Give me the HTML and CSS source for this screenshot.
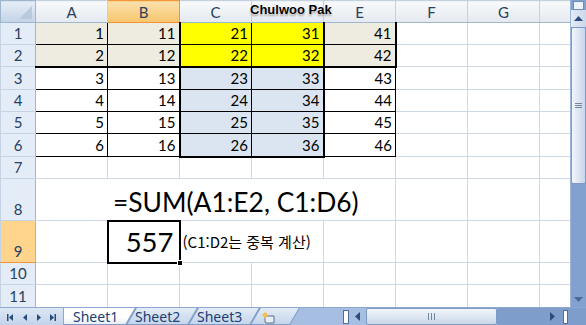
FILE: index.html
```html
<!DOCTYPE html>
<html lang="ko">

<head>
    <meta charset="UTF-8">
    <meta name="viewport" content="width=device-width, initial-scale=1.0">
    <title>Book1 - SUM</title>
    <link rel="stylesheet" href="styles.css">
</head>

<body>
    <div class="window">
        <div class="main">
            <div class="sheet">
                <table class="grid">
                    <colgroup>
                        <col class="c-head">
                        <col class="c-cell"><col class="c-cell"><col class="c-cell"><col class="c-cell">
                        <col class="c-cell"><col class="c-cell"><col class="c-cell">
                        <col class="c-last">
                    </colgroup>
                    <tr class="r-head">
                        <th class="corner"><span class="corner-tri"></span></th>
                        <th class="col">A</th>
                        <th class="col sel">B</th>
                        <th class="col">C</th>
                        <th class="col"><!-- D hidden under the name --></th>
                        <th class="col">E</th>
                        <th class="col">F</th>
                        <th class="col">G</th>
                        <th class="col"></th>
                    </tr>
                    <tr>
                        <th class="row">1</th>
                        <td class="d beige">1</td><td class="d beige">11</td>
                        <td class="d yel tl">21</td><td class="d yel tr">31</td>
                        <td class="d beige tr">41</td>
                        <td></td><td></td><td></td>
                    </tr>
                    <tr>
                        <th class="row">2</th>
                        <td class="d beige tb">2</td><td class="d beige tb">12</td>
                        <td class="d yel tl tb">22</td><td class="d yel tr tb">32</td>
                        <td class="d beige tr tb">42</td>
                        <td></td><td></td><td></td>
                    </tr>
                    <tr class="r23">
                        <th class="row">3</th>
                        <td class="d">3</td><td class="d">13</td>
                        <td class="d blue tl">23</td><td class="d blue tr">33</td>
                        <td class="d">43</td>
                        <td></td><td></td><td></td>
                    </tr>
                    <tr>
                        <th class="row">4</th>
                        <td class="d">4</td><td class="d">14</td>
                        <td class="d blue tl">24</td><td class="d blue tr">34</td>
                        <td class="d">44</td>
                        <td></td><td></td><td></td>
                    </tr>
                    <tr>
                        <th class="row">5</th>
                        <td class="d">5</td><td class="d">15</td>
                        <td class="d blue tl">25</td><td class="d blue tr">35</td>
                        <td class="d">45</td>
                        <td></td><td></td><td></td>
                    </tr>
                    <tr class="r23">
                        <th class="row">6</th>
                        <td class="d">6</td><td class="d">16</td>
                        <td class="d blue tl tb">26</td><td class="d blue tr tb">36</td>
                        <td class="d">46</td>
                        <td></td><td></td><td></td>
                    </tr>
                    <tr>
                        <th class="row">7</th>
                        <td></td><td></td><td></td><td></td><td></td><td></td><td></td><td></td>
                    </tr>
                    <tr class="r-tall">
                        <th class="row">8</th>
                        <td colspan="5" class="formula">=SUM(A1:E2, C1:D6)</td>
                        <td></td><td></td><td></td>
                    </tr>
                    <tr class="r-tall">
                        <th class="row sel">9</th>
                        <td></td>
                        <td class="active">557<span class="handle"></span></td>
                        <td colspan="2" class="note">(C1:D2는 중복 계산)</td>
                        <td></td><td></td><td></td><td></td>
                    </tr>
                    <tr>
                        <th class="row">10</th>
                        <td></td><td></td><td></td><td></td><td></td><td></td><td></td><td></td>
                    </tr>
                    <tr class="r23">
                        <th class="row">11</th>
                        <td></td><td></td><td></td><td></td><td></td><td></td><td></td><td></td>
                    </tr>
                </table>
                <div class="author">Chulwoo Pak</div>
            </div>

            <div class="vscroll">
                <div class="vsplit"></div>
                <div class="vbtn">
                    <svg width="9" height="5" viewBox="0 0 9 5"><path d="M0 5 L4.5 0 L9 5 Z" fill="#2d4c7c"/></svg>
                </div>
                <div class="vthumb"><span class="grip-v"></span></div>
                <div class="vtrack"></div>
                <div class="vbtn down">
                    <svg width="9" height="5" viewBox="0 0 9 5"><path d="M0 0 L9 0 L4.5 5 Z" fill="#4a6894"/></svg>
                </div>
            </div>
        </div>

        <div class="tabbar">
            <div class="nav">
                <svg width="63" height="18" viewBox="0 0 63 18">
                    <rect x="7" y="6" width="1.5" height="7" fill="#284b7f"/>
                    <path d="M13 6 L9 9.5 L13 13 Z" fill="#284b7f"/>
                    <path d="M27 6 L23 9.5 L27 13 Z" fill="#284b7f"/>
                    <path d="M37 6 L41 9.5 L37 13 Z" fill="#284b7f"/>
                    <path d="M50 6 L54 9.5 L50 13 Z" fill="#284b7f"/>
                    <rect x="54.5" y="6" width="1.5" height="7" fill="#284b7f"/>
                </svg>
            </div>
            <div class="tabs">
                <div class="tab current">Sheet1</div>
                <div class="tab">Sheet2</div>
                <div class="tab">Sheet3</div>
                <div class="tab newtab">
                    <svg width="15" height="13" viewBox="0 0 15 13">
                        <path d="M4 5 H13 V12 H5 L4 11 Z" fill="#e8eef7" stroke="#5b6f8c" stroke-width="1"/>
                        <circle cx="4" cy="4" r="2.2" fill="#f5b43b"/>
                        <path d="M4 0.5 V7.5 M0.5 4 H7.5" stroke="#f7c75a" stroke-width="1"/>
                    </svg>
                </div>
            </div>
            <div class="hscroll">
                <div class="hsplit"></div>
                <div class="hbtn">
                    <svg width="5" height="9" viewBox="0 0 5 9"><path d="M5 0 L0 4.5 L5 9 Z" fill="#2d4c7c"/></svg>
                </div>
                <div class="hthumb"><span class="grip-h"></span></div>
                <div class="hend">
                    <div class="hbtn">
                        <svg width="5" height="9" viewBox="0 0 5 9"><path d="M0 0 L5 4.5 L0 9 Z" fill="#2d4c7c"/></svg>
                    </div>
                    <div class="hsplit"></div>
                </div>
            </div>
        </div>
    </div>
</body>

</html>
```

FILE: styles.css
```css
* {
    box-sizing: border-box;
}

body {
    margin: 0;
    width: 586px;
    height: 325px;
    overflow: hidden;
    background: #fff;
    font-family: Lato, 'Liberation Sans', sans-serif;
}

.window {
    display: flex;
    flex-direction: column;
    height: 325px;
}

.main {
    display: flex;
    height: 307px;
}

.sheet {
    position: relative;
    width: 570px;
    height: 307px;
    overflow: hidden;
}

/* grid */
.grid {
    border-collapse: collapse;
    table-layout: fixed;
    width: 570px;
}

.c-head { width: 35px; }
.c-cell { width: 72px; }
.c-last { width: 31px; }

.grid tr { height: 22px; }
.grid tr.r23 { height: 23px; }
.grid tr.r-tall { height: 42px; }

.grid td {
    border: 1px solid #d0d7e5;
    padding: 0 3px 2px 3px;
    font-size: 15px;
    line-height: 17px;
    text-align: right;
    vertical-align: bottom;
    white-space: nowrap;
    color: #000;
}

.grid th {
    font-weight: normal;
    font-size: 15px;
    color: #27415f;
    padding: 0;
    white-space: nowrap;
}

.corner {
    position: relative;
    border: 1px solid #9eb6ce;
    background: linear-gradient(#e6edf6, #c3d3e8);
}

.corner-tri {
    position: absolute;
    right: 3px;
    bottom: 3px;
    width: 0;
    height: 0;
    border-left: 13px solid transparent;
    border-bottom: 13px solid #b9c9de;
}

.col {
    border: 1px solid #c5d1de;
    border-bottom-color: #9eb6ce;
    background: linear-gradient(#f8f9fb, #e4e9f0);
    text-align: center;
    vertical-align: middle;
}

.col.sel {
    border-color: #f29536;
    background: linear-gradient(#fbe1ad, #f6c56e);
}

.row {
    border: 1px solid #c5d3e5;
    border-right-color: #9eb6ce;
    background: #e4ecf7;
    text-align: center;
    vertical-align: bottom;
    padding-bottom: 2px !important;
    line-height: 17px;
}

.row.sel {
    border-top-color: #f29536;
    border-bottom-color: #f29536;
    background: #ffd58d;
}

/* data block */
.grid td.d { border-color: #000; }
.grid td.tl { border-left: 2px solid #000; }
.grid td.tr { border-right: 2px solid #000; }
.grid td.tb { border-bottom: 2px solid #000; }

.beige { background: #eeece1; }
.yel { background: #ffff00; }
.blue { background: #dbe5f1; }

.grid td.formula {
    text-align: left;
    padding-left: 77px;
    font-size: 26.4px;
    line-height: 30px;
    padding-bottom: 3px;
}

.grid td.active {
    position: relative;
    border: 2px solid #000;
    font-size: 27.5px;
    line-height: 30px;
    padding-right: 5px;
    padding-bottom: 5px;
}

.handle {
    position: absolute;
    right: -4px;
    bottom: -4px;
    width: 6px;
    height: 6px;
    background: #000;
    border: 1px solid #fff;
}

.grid td.note {
    text-align: left;
    vertical-align: middle;
    padding: 0 2px 0 2px;
    font-family: 'Noto Sans CJK KR', sans-serif;
    font-size: 15px;
    line-height: 16px;
}

.author {
    position: absolute;
    left: 250px;
    top: 2px;
    font-family: 'Liberation Sans', sans-serif;
    font-weight: bold;
    font-size: 13px;
    color: #000;
    text-shadow: 0 0 1px #fff, 0 0 2px #fff, 0 2px 2px #999;
}

/* vertical scrollbar */
.vscroll {
    width: 16px;
    display: flex;
    flex-direction: column;
    background: #82a1cf;
    border-left: 1px solid #9db7dc;
}

.vsplit {
    height: 9px;
    margin: 1px 2px 0 2px;
    border: 1px solid #6f8db8;
    background: #eef3fa;
}

.vbtn {
    height: 17px;
    display: flex;
    align-items: center;
    justify-content: center;
    background: linear-gradient(90deg, #e3ebf6, #cbd9ec);
}

.vbtn.down {
    height: 16px;
    background: none;
}

.vthumb {
    height: 157px;
    display: flex;
    align-items: center;
    justify-content: center;
    border: 1px solid #7d99c4;
    border-radius: 2px;
    background: linear-gradient(90deg, #f2f5fa, #c9d7ea);
}

.grip-v {
    width: 7px;
    height: 5px;
    border-top: 1px solid #71869f;
    border-bottom: 1px solid #71869f;
    background: linear-gradient(transparent 1px, #71869f 1px, #71869f 2px, transparent 2px);
}

.vtrack {
    flex: 1;
}

/* bottom bar */
.tabbar {
    display: flex;
    height: 18px;
    background: #a5bee1;
    border-top: 1px solid #8ca8d2;
}

.nav {
    position: relative;
    z-index: 3;
    width: 64px;
    display: flex;
    background: linear-gradient(#dde7f4, #c2d3ea);
    border-right: 1px solid #8ca8d2;
}

.tabs {
    flex: 1;
    display: flex;
    overflow: hidden;
}

.tab {
    position: relative;
    width: 62px;
    height: 17px;
    padding-left: 9px;
    font-family: 'Noto Sans', sans-serif;
    font-size: 14px;
    line-height: 17px;
    color: #1b3e74;
    z-index: 1;
}

.tab::before {
    content: '';
    position: absolute;
    left: 0;
    right: 0;
    top: -1px;
    bottom: 0;
    z-index: -1;
    transform: skewX(-30deg);
    transform-origin: bottom left;
    background: linear-gradient(#e6eef8, #c4d5ec);
    border: 1px solid #7f9bc7;
    border-top: none;
}

.tab.current {
    z-index: 2;
}

.tab.current::before {
    left: -10px;
    background: linear-gradient(#fff 60%, #e9eef5);
    border-left: none;
}

.tab.newtab {
    width: 40px;
    padding: 2px 0 0 11px;
}

.hscroll {
    width: 246px;
    display: flex;
    align-items: center;
}

.hsplit {
    width: 6px;
    height: 14px;
    border: 1px solid #4f6e9b;
    background: #fff;
    margin-left: 3px;
}

.hbtn {
    width: 17px;
    height: 17px;
    display: flex;
    align-items: center;
    justify-content: center;
}

.hthumb {
    width: 131px;
    height: 17px;
    display: flex;
    align-items: center;
    justify-content: center;
    border: 1px solid #7d99c4;
    border-radius: 2px;
    background: linear-gradient(#f2f5fa, #c9d7ea);
}

.grip-h {
    width: 7px;
    height: 7px;
    border-left: 1px solid #71869f;
    border-right: 1px solid #71869f;
    background: linear-gradient(90deg, transparent 2px, #71869f 2px, #71869f 3px, transparent 3px);
}

.hend {
    flex: 1;
    align-self: stretch;
    display: flex;
    align-items: center;
    padding-left: 47px;
    background: #7f9dca;
}

.hend .hsplit {
    width: 5px;
    margin-left: 2px;
}
```
